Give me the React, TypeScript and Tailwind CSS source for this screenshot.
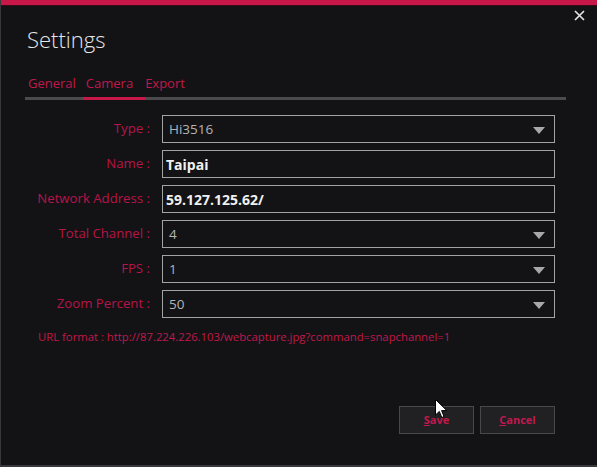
import React from 'react';

const FONT = { fontFamily: '"Open Sans", "Noto Sans", sans-serif' };

type Row = { label: string; value: string; select?: boolean; bold?: boolean };

const ROWS: Row[] = [
  { label: 'Type :', value: 'Hi3516', select: true },
  { label: 'Name :', value: 'Taipai', bold: true },
  { label: 'Network Address :', value: '59.127.125.62/', bold: true },
  { label: 'Total Channel :', value: '4', select: true },
  { label: 'FPS :', value: '1', select: true },
  { label: 'Zoom Percent :', value: '50', select: true },
];

function Caret() {
  return (
    <svg width="12" height="7" viewBox="0 0 12 7" className="absolute right-[9px] top-[11px]">
      <path d="M0 0 H12 L6 7 Z" fill="#a8a8a8" />
    </svg>
  );
}

function Field({ row }: { row: Row }) {
  return (
    <div className="flex items-center h-[28px]">
      <div className="w-[150px] text-right text-[13.2px] text-[#b8144a] pr-[1px]">{row.label}</div>
      <div className="relative ml-[11px] w-[393px] h-[28px] border border-[#a3a3a3] bg-[#131316] flex items-center px-[3px]">
        <span className={row.bold ? 'text-[14px] font-bold text-[#f0f0f0]' : 'text-[13.5px] text-[#b4b4b4] pl-[3px]'}>
          {row.value}
        </span>
        {row.select && <Caret />}
      </div>
    </div>
  );
}

function Button({ first, rest }: { first: string; rest: string }) {
  return (
    <button className="w-[75px] h-[28px] bg-[#212124] border border-[#48484b] text-[11px] font-bold text-[#c0184c]">
      <span className="underline">{first}</span>
      {rest}
    </button>
  );
}

export default function App() {
  return (
    <div style={FONT} className="relative w-[597px] h-[467px] bg-[#131315] border-l border-b-2 border-[#38383b] flex flex-col overflow-hidden">
      <div className="h-[5px] bg-[#c8184a] shrink-0" />
      <div className="h-[1px] bg-[#3a0a18] shrink-0" />

      {/* close */}
      <svg width="11" height="11" viewBox="0 0 11 11" className="absolute left-[573px] top-[10px]">
        <path d="M1 1 L10 10 M10 1 L1 10" stroke="#e8e8e8" strokeWidth="1.6" />
      </svg>

      <div className="pl-[26px] pt-[17px] text-[22px] font-light text-[#e6e6e6] leading-[32px]">Settings</div>

      {/* tabs */}
      <div className="ml-[24px] mt-[19px] w-[541px]">
        <div className="flex text-[13px] text-[#c0184c] leading-[18px]">
          <div className="pl-[3px] pr-[7px]">General</div>
          <div className="px-[3px] mr-[8px]">Camera</div>
          <div className="pl-[1px]">Export</div>
        </div>
        <div className="mt-[5px] h-[3px] bg-[#4b4b4d] flex">
          <div className="ml-[58px] w-[62px] bg-[#c8184a]" />
        </div>
      </div>

      <div className="mt-[15px] flex flex-col gap-[7px]">
        {ROWS.map(r => (
          <Field key={r.label} row={r} />
        ))}
      </div>

      <div className="pl-[37px] mt-[11px] text-[11.3px] text-[#c0184c] leading-[16px]">
        URL format : http://87.224.226.103/webcapture.jpg?command=snapchannel=1
      </div>

      <div className="mt-auto mb-[31px] flex justify-end gap-[6px] pr-[42px]">
        <Button first="S" rest="ave" />
        <Button first="C" rest="ancel" />
      </div>

      {/* mouse pointer */}
      <svg width="13" height="20" viewBox="0 0 13 20" className="absolute left-[434px] top-[399px]">
        <path d="M0.5 0.5 V16 L4.3 12.4 L6.8 18.5 L9 17.6 L6.6 11.6 H11.8 Z" fill="#ffffff" stroke="#000000" strokeWidth="1" />
      </svg>
    </div>
  );
}
